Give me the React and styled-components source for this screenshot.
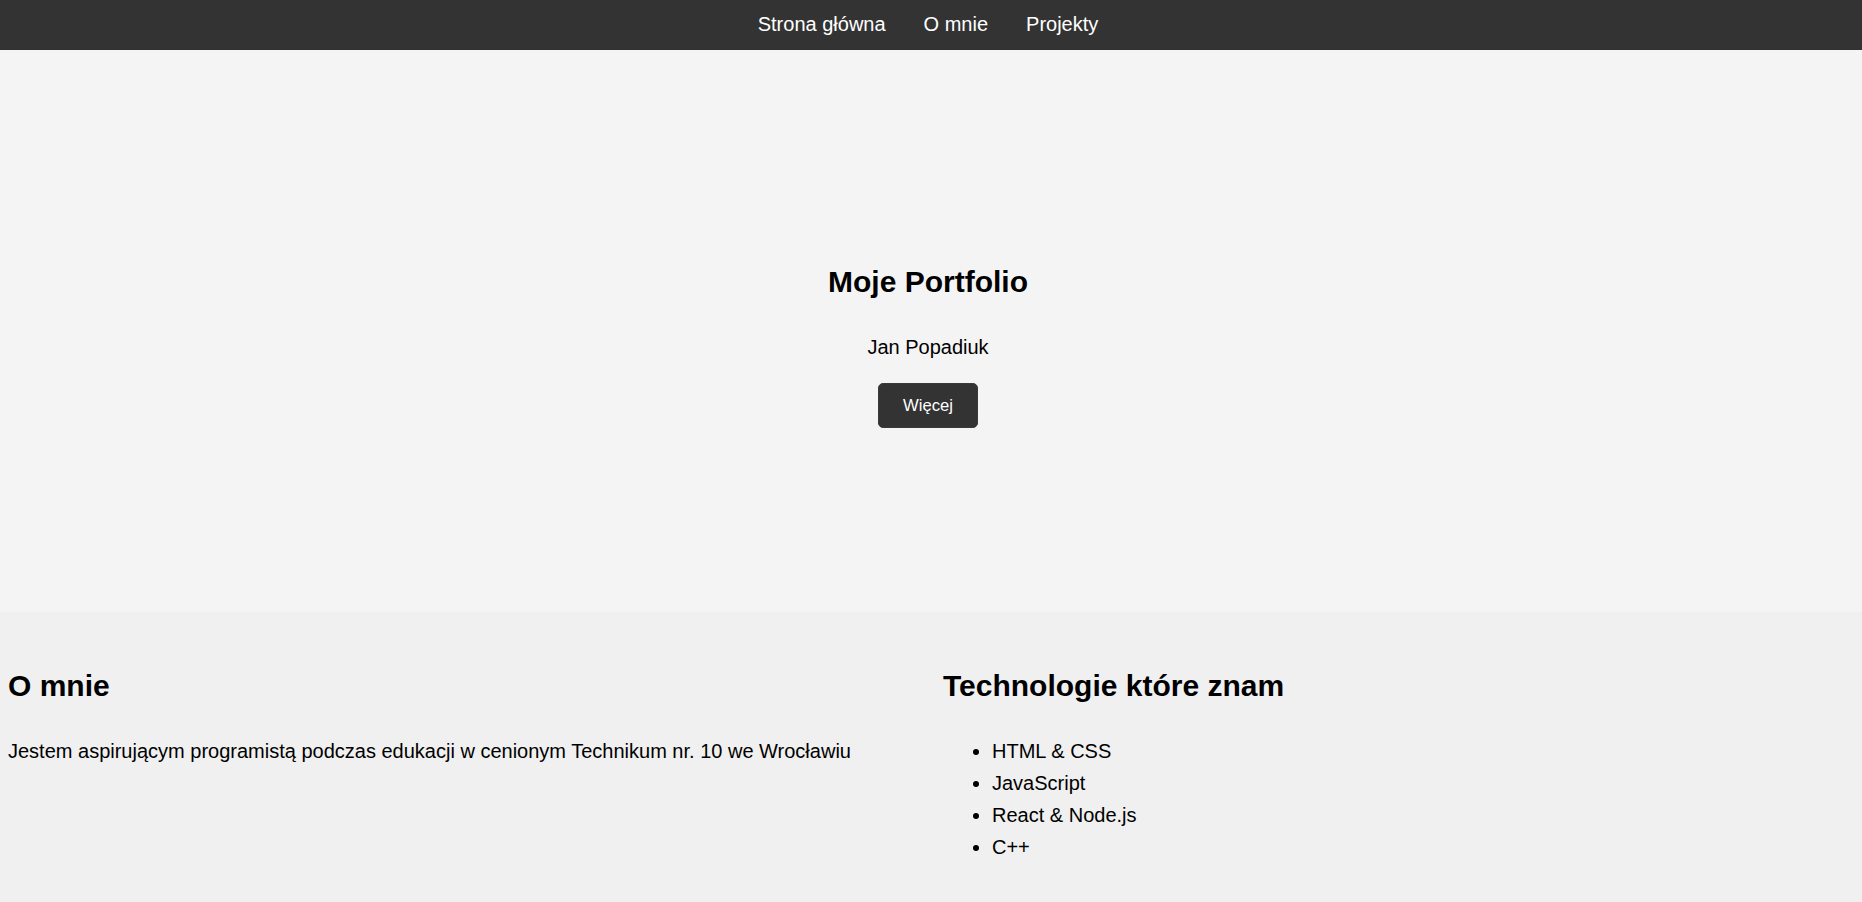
import React from 'react';
import styled, { createGlobalStyle } from 'styled-components';

const GlobalStyle = createGlobalStyle`
  * { box-sizing: border-box; }
  body {
    margin: 0;
    font-family: "Liberation Sans", Arial, sans-serif;
    font-size: 20px;
    color: #000;
    background: #f0f0f0;
  }
`;

const Nav = styled.nav`
  height: 50px;
  background: #333;
  display: flex;
  justify-content: center;
  align-items: center;
  padding: 0 6px 2px 0;
`;

const NavList = styled.ul`
  list-style: none;
  margin: 0;
  padding: 0;
  display: flex;
  gap: 38px;
`;

const NavLink = styled.a`
  color: #fff;
  text-decoration: none;
  font-size: 20px;
  line-height: 23px;
`;

const Hero = styled.header`
  height: 562px;
  background: #f4f4f4;
  display: flex;
  flex-direction: column;
  align-items: center;
  padding-top: 215px;
  padding-right: 6px;
`;

const Title = styled.h1`
  margin: 0 0 37px;
  font-size: 30px;
  line-height: 34px;
  font-weight: bold;
`;

const Name = styled.p`
  margin: 0 0 24px;
  font-size: 20px;
  line-height: 23px;
`;

const MoreButton = styled.button`
  height: 45px;
  width: 100px;
  padding: 0;
  background: #333;
  color: #fff;
  border: 1px solid #3a3a3a;
  border-radius: 5px;
  font-family: inherit;
  font-size: 16.67px;
  cursor: pointer;
`;

const Info = styled.main`
  background: #f0f0f0;
  display: grid;
  grid-template-columns: 1fr 1fr;
  gap: 24px;
  padding: 57px 8px 40px;
`;

const Column = styled.section``;

const Heading = styled.h2`
  margin: 0 0 31px;
  font-size: 30px;
  line-height: 34.5px;
  font-weight: bold;
`;

const Text = styled.p`
  margin: 0;
  font-size: 20px;
  line-height: 32px;
`;

const TechList = styled.ul`
  margin: 0;
  padding-left: 49px;
  font-size: 20px;
  line-height: 32px;
`;

const links = ['Strona główna', 'O mnie', 'Projekty'];
const tech = ['HTML & CSS', 'JavaScript', 'React & Node.js', 'C++'];

const App = () => (
  <>
    <GlobalStyle />
    <Nav>
      <NavList>
        {links.map((l) => (
          <li key={l}>
            <NavLink href="#">{l}</NavLink>
          </li>
        ))}
      </NavList>
    </Nav>
    <Hero>
      <Title>Moje Portfolio</Title>
      <Name>Jan Popadiuk</Name>
      <MoreButton>Więcej</MoreButton>
    </Hero>
    <Info>
      <Column>
        <Heading>O mnie</Heading>
        <Text>Jestem aspirującym programistą podczas edukacji w cenionym Technikum nr. 10 we Wrocławiu</Text>
      </Column>
      <Column>
        <Heading>Technologie które znam</Heading>
        <TechList>
          {tech.map((t) => (
            <li key={t}>{t}</li>
          ))}
        </TechList>
      </Column>
    </Info>
  </>
);

export default App;
